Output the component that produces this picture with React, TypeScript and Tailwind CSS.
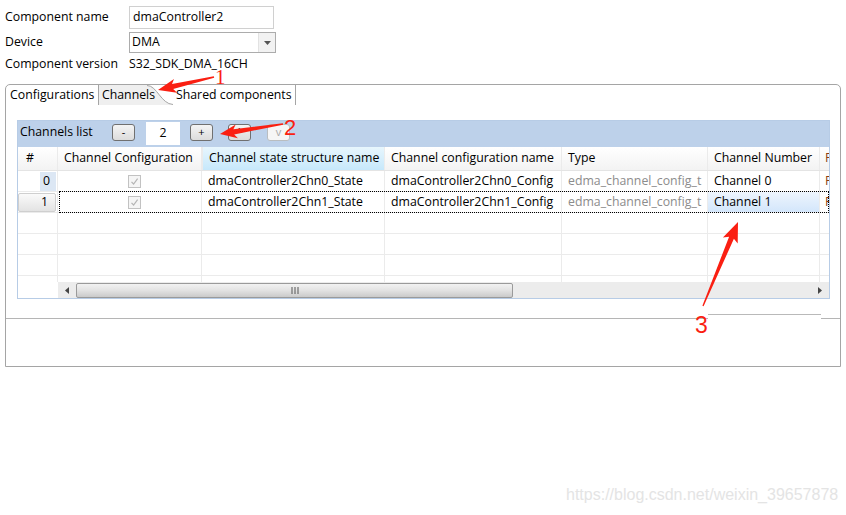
import React from "react";

type Pt = [number, number];

// tapered annotation arrow, tip first
function arrowPoints(tip: Pt, tail: Pt, headLen: number, headHalf: number, shaftHalf: number, tailHalf: number) {
  const dx = tail[0] - tip[0];
  const dy = tail[1] - tip[1];
  const len = Math.hypot(dx, dy);
  const ux = dx / len;
  const uy = dy / len;
  const px = -uy;
  const py = ux;
  const bx = tip[0] + ux * headLen;
  const by = tip[1] + uy * headLen;
  const cx = tip[0] + ux * (headLen + 3);
  const cy = tip[1] + uy * (headLen + 3);
  const pts: Pt[] = [
    tip,
    [cx + px * headHalf, cy + py * headHalf],
    [bx + px * shaftHalf, by + py * shaftHalf],
    [tail[0] + px * tailHalf, tail[1] + py * tailHalf],
    [tail[0] - px * tailHalf, tail[1] - py * tailHalf],
    [bx - px * shaftHalf, by - py * shaftHalf],
    [cx - px * headHalf, cy - py * headHalf],
  ];
  return pts.map((p) => `${p[0].toFixed(1)},${p[1].toFixed(1)}`).join(" ");
}

const rows = [
  { n: "0", state: "dmaController2Chn0_State", cfg: "dmaController2Chn0_Config", type: "edma_channel_config_t", ch: "Channel 0" },
  { n: "1", state: "dmaController2Chn1_State", cfg: "dmaController2Chn1_Config", type: "edma_channel_config_t", ch: "Channel 1" },
];

function Check() {
  return (
    <span className="flex h-[13px] w-[13px] items-center justify-center border border-[#c2c2c2] bg-[#f5f5f5]">
      <svg width="9" height="9" viewBox="0 0 9 9">
        <path d="M1.5 4.8 L3.6 7 L7.6 1.6" fill="none" stroke="#b5b5b5" strokeWidth="1.2" />
      </svg>
    </span>
  );
}

function Btn({ label, dim }: { label: string; dim?: boolean }) {
  return (
    <span
      className={
        dim
          ? "mt-[3px] flex h-[17px] w-[23px] items-center justify-center rounded-[3px] border border-[#b9bdc0] bg-[#f6f6f6] text-[11px] text-[#a8a8a8]"
          : "mt-[3px] flex h-[17px] w-[23px] items-center justify-center rounded-[3px] border border-[#707070] bg-linear-to-b from-[#f4f4f4] to-[#dcdcdc] text-[11px]"
      }
    >
      {label}
    </span>
  );
}

const cell = "h-full shrink-0 border-r border-[#ebebeb] pl-[6px] flex items-center whitespace-nowrap overflow-hidden";
const lastCell = "flex min-w-0 flex-1 items-center overflow-hidden whitespace-nowrap pl-[5px] text-[#8a3c12]";

export default function App() {
  return (
    <div className="relative h-[515px] w-[846px] overflow-hidden bg-white font-['Open_Sans',sans-serif] text-[12.3px] text-black">
      {/* component form */}
      <div className="pl-[5px] pt-[6px]">
        <div className="flex h-[23px] items-center">
          <span className="w-[124px]">Component name</span>
          <span className="flex h-[23px] w-[145px] items-center border border-[#d0d0d0] pl-[3px]">dmaController2</span>
        </div>
        <div className="mt-[3px] flex h-[21px] items-center">
          <span className="w-[124px]">Device</span>
          <span className="flex h-[21px] w-[147px] items-center border border-[#acacac] pl-[2px]">
            <span className="flex-1">DMA</span>
            <span className="flex h-full w-[17px] items-center justify-center border-l border-[#e2e2e2] bg-[#f2f2f2]">
              <svg width="7" height="4" viewBox="0 0 7 4">
                <path d="M0 0 H7 L3.5 4 Z" fill="#555" />
              </svg>
            </span>
          </span>
        </div>
        <div className="mt-[3px] flex h-[17px] items-center">
          <span className="w-[124px]">Component version</span>
          <span>S32_SDK_DMA_16CH</span>
        </div>
      </div>

      {/* tab folder */}
      <div className="mx-[5px] mt-[11px] flex h-[283px] w-[836px] flex-col rounded-t-[5px] border border-[#a5a5a5]">
        <div className="flex h-[20px] shrink-0">
          <span className="flex w-[93px] items-center border-r border-[#a5a5a5] pl-[4px]">Configurations</span>
          <span className="relative flex w-[74px] items-center pl-[3px]">
            <svg className="absolute inset-0" width="74" height="20" viewBox="0 0 74 20">
              <path d="M0 0 H48 C58 0 62 19 74 20 H0 Z" fill="#efefef" />
              <path d="M48 0.5 C58 0.5 62 19 74 19.5" fill="none" stroke="#a5a5a5" />
            </svg>
            <span className="relative">Channels</span>
          </span>
          <span className="flex w-[123px] items-center border-r border-[#a5a5a5] pl-[3px]">Shared components</span>
        </div>

        <div className="pt-[15px]">
          <div className="ml-[11px] w-[813px] border border-[#b7cce6]">
            {/* toolbar */}
            <div className="flex h-[26px] items-start bg-[#bdd1ea]">
              <span className="mt-[2px] w-[94px] pl-[2px]">Channels list</span>
              <Btn label="-" />
              <span className="ml-[11px] mt-[1px] flex h-[23px] w-[34px] items-center justify-center bg-white">2</span>
              <span className="ml-[10px]">
                <Btn label="+" />
              </span>
              <span className="ml-[15px]">
                <Btn label="^" />
              </span>
              <span className="ml-[16px]">
                <Btn label="v" dim />
              </span>
            </div>

            {/* header */}
            <div className="flex h-[24px] border-b border-[#e4e4e4] bg-linear-to-b from-white to-[#f3f3f3]">
              <span className={`${cell} w-[40px] border-[#dedede] pl-[8px]`}>#</span>
              <span className={`${cell} w-[144px] border-[#dedede]`}>Channel Configuration</span>
              <span className={`${cell} w-[183px] border-l border-[#9ad6f5] bg-linear-to-b from-[#e8f6fd] to-[#c6e8fb]`}>
                Channel state structure name
              </span>
              <span className={`${cell} w-[177px] border-[#dedede]`}>Channel configuration name</span>
              <span className={`${cell} w-[146px] border-[#dedede]`}>Type</span>
              <span className={`${cell} w-[112px] border-[#dedede]`}>Channel Number</span>
              <span className={lastCell}>Priority</span>
            </div>

            {/* rows */}
            {rows.map((r, i) => (
              <div key={r.n} className="flex h-[21px] border-b border-[#ebebeb]">
                <span className="flex h-full w-[40px] shrink-0 items-center justify-end border-r border-[#ebebeb] pr-[1px]">
                  {i === 0 ? (
                    <span className="flex h-[19px] w-[16px] items-center justify-end bg-[#dce7f4] pr-[6px]">{r.n}</span>
                  ) : (
                    <span className="flex h-[19px] w-[38px] items-center justify-end rounded-[2px] border border-[#cfcfcf] bg-linear-to-b from-[#fafafa] to-[#e3e3e3] pr-[7px]">
                      {r.n}
                    </span>
                  )}
                </span>
                <div className="relative flex min-w-0 flex-1">
                  <span className={`${cell} w-[144px] pl-[70px]`}>
                    <Check />
                  </span>
                  <span className={`${cell} w-[183px]`}>{r.state}</span>
                  <span className={`${cell} w-[177px]`}>{r.cfg}</span>
                  <span className={`${cell} w-[146px] text-[#8c8c8c]`}>{r.type}</span>
                  <span className={`${cell} w-[112px] ${i === 1 ? "bg-linear-to-b from-[#eef5fd] to-[#d3e6fb]" : ""}`}>{r.ch}</span>
                  <span className={lastCell}>Priority</span>
                  {i === 1 && (
                    <span className="pointer-events-none absolute bottom-[-1px] left-[1px] right-0 top-[-1px] border border-dotted border-black" />
                  )}
                </div>
              </div>
            ))}

            {[0, 1, 2].map((k) => (
              <div key={k} className="flex h-[21px] border-b border-[#ebebeb]">
                <span className={`${cell} w-[40px]`} />
                <span className={`${cell} w-[144px]`} />
                <span className={`${cell} w-[183px]`} />
                <span className={`${cell} w-[177px]`} />
                <span className={`${cell} w-[146px]`} />
                <span className={`${cell} w-[112px]`} />
                <span className="flex-1" />
              </div>
            ))}
            <div className="flex h-[6px]">
              <span className={`${cell} w-[40px]`} />
              <span className={`${cell} w-[144px]`} />
              <span className={`${cell} w-[183px]`} />
              <span className={`${cell} w-[177px]`} />
              <span className={`${cell} w-[146px]`} />
              <span className={`${cell} w-[112px]`} />
              <span className="flex-1" />
            </div>

            {/* horizontal scrollbar */}
            <div className="flex h-[16px]">
              <span className="w-[40px] shrink-0" />
              <div className="flex flex-1 items-center bg-[#ececec]">
                <span className="flex w-[18px] justify-center">
                  <svg width="4" height="7" viewBox="0 0 4 7">
                    <path d="M4 0 V7 L0 3.5 Z" fill="#444" />
                  </svg>
                </span>
                <span className="flex h-[15px] w-[437px] items-center justify-center rounded-[2px] border border-[#9a9a9a] bg-linear-to-b from-[#f2f2f2] via-[#e2e2e2] to-[#cacaca]">
                  <svg width="8" height="7" viewBox="0 0 8 7">
                    <path d="M1 0 V7 M4 0 V7 M7 0 V7" stroke="#555" strokeWidth="1" />
                  </svg>
                </span>
                <span className="flex-1" />
                <span className="flex w-[18px] justify-center">
                  <svg width="4" height="7" viewBox="0 0 4 7">
                    <path d="M0 0 V7 L4 3.5 Z" fill="#444" />
                  </svg>
                </span>
              </div>
            </div>
          </div>
        </div>

        <div className="h-[19px] shrink-0" />
        <div className="h-[48px] shrink-0 border-t border-[#b5b5b5]" />
      </div>

      {/* screenshot annotations */}
      <div className="absolute left-[708px] top-[314px] h-[12px] w-[113px] border-t border-[#b9b9b9] bg-white" />
      <svg className="pointer-events-none absolute left-0 top-0" width="846" height="515" viewBox="0 0 846 515">
        <polygon points={arrowPoints([158, 90], [214, 77], 15, 7, 2.6, 0.7)} fill="#fa1f12" />
        <polygon points={arrowPoints([220, 134], [283, 124], 14, 7, 2.6, 0.7)} fill="#fa1f12" />
        <polygon points={arrowPoints([738, 222], [703, 306], 17, 8, 2.6, 0.7)} fill="#fa1f12" />
      </svg>
      <span className="absolute left-[215px] top-[67px] font-['Liberation_Serif',serif] text-[21px] leading-none text-[#fa1f12]">1</span>
      <span className="absolute left-[284px] top-[117px] font-['Liberation_Sans',sans-serif] text-[22px] leading-none text-[#fa1f12]">2</span>
      <span className="absolute left-[695px] top-[314px] font-['Liberation_Sans',sans-serif] text-[23px] leading-none text-[#fa1f12]">3</span>

      <span className="absolute left-[566px] top-[487px] font-['Liberation_Sans',sans-serif] text-[16px] leading-none text-[#e4e4e4]">
        https://blog.csdn.net/weixin_39657878
      </span>
    </div>
  );
}
